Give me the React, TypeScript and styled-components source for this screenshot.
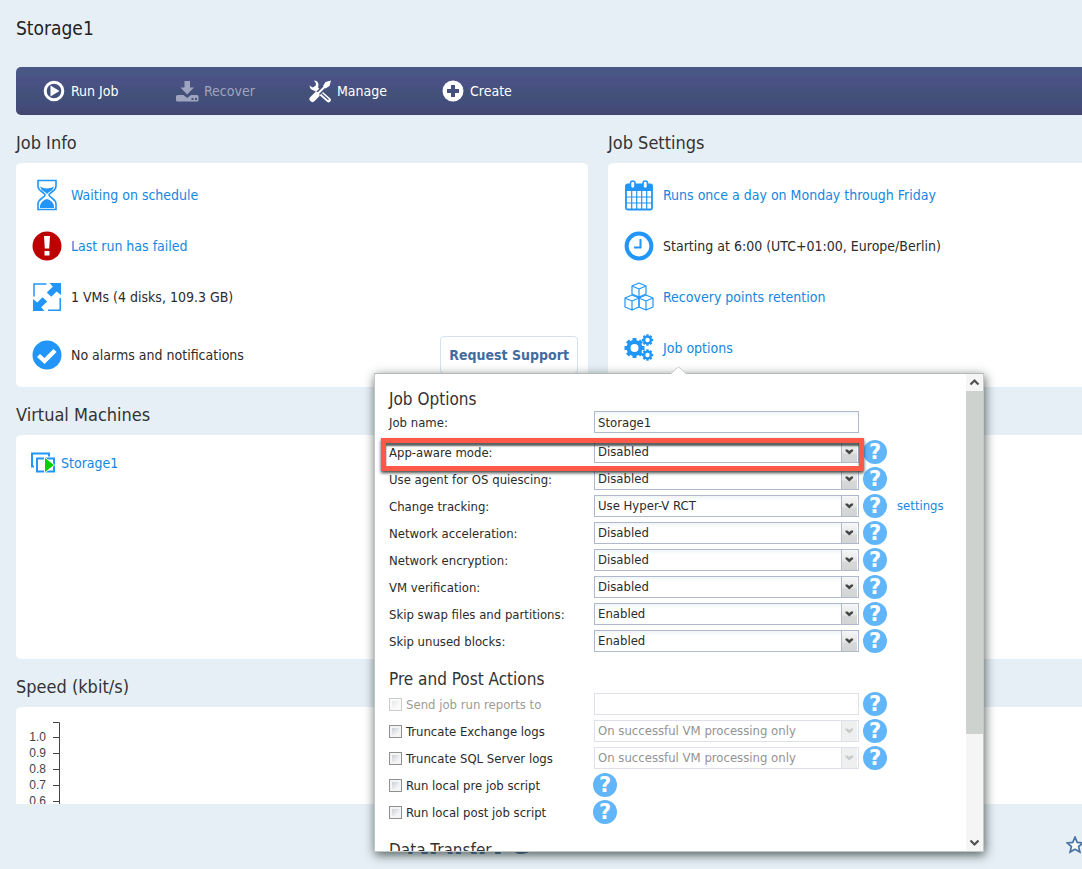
import React from 'react';
import styled, { createGlobalStyle, css } from 'styled-components';

const font = '"DejaVu Sans Condensed", "DejaVu Sans", sans-serif';
const blue = '#2196f8';

const GlobalStyle = createGlobalStyle`
  *, *::before, *::after { box-sizing: border-box; }
  body {
    margin: 0;
    background: #e7eff6;
    color: #2b2b2b;
    font-family: ${font};
    font-size: 14px;
    line-height: 20px;
  }
  button, input, select { font: inherit; color: inherit; }
`;

/* ---------- page ---------- */

const Page = styled.div`
  display: flex;
  flex-direction: column;
  min-height: 100vh;
  padding-left: 16px;
  overflow: hidden;
`;

const Title = styled.h1`
  margin: 0;
  padding: 16px 0 27px;
  font-size: 19px;
  line-height: 24px;
  font-weight: normal;
  color: #222;
`;

const Toolbar = styled.nav`
  display: flex;
  height: 48px;
  padding-left: 27px;
  border-radius: 5px 0 0 5px;
  background: linear-gradient(
    #495785 0, #495785 9px, #4b5185 11px, #4a5184 18px, #42507a 24px,
    #42507a 32px, #434d7b 36px, #444a77 42px, #41456e 48px
  );
`;

const ToolButton = styled.button`
  display: flex;
  align-items: center;
  gap: 5px;
  width: 133px;
  padding: 0;
  border: 0;
  background: none;
  color: #fff;
  text-align: left;

  svg { flex: none; }

  &:disabled { color: #a0a5bf; }
`;

const Columns = styled.div`
  display: grid;
  grid-template-columns: minmax(0, 572fr) minmax(0, 474fr);
  column-gap: 20px;
`;

const Section = styled.section`
  position: relative;
`;

const SectionTitle = styled.h2`
  margin: 0;
  padding: 16px 0 8px;
  font-size: 18px;
  line-height: 24px;
  font-weight: normal;
  color: #333;
`;

const Card = styled.div<{ $edge?: boolean; $pad?: string }>`
  min-height: 224px;
  padding: ${(p) => p.$pad ?? '6px 0 0 16px'};
  border-radius: ${(p) => (p.$edge ? '5px 0 0 5px' : '5px')};
  background: #fff;
`;

const List = styled.ul`
  margin: 0;
  padding: 0;
  list-style: none;
`;

const Item = styled.li<{ $tall?: boolean; $tight?: boolean }>`
  display: flex;
  align-items: center;
  gap: ${(p) => (p.$tight ? '5px' : '9px')};
  height: ${(p) => (p.$tall ? '65px' : '51px')};

  svg { flex: none; }
`;

const Link = styled.a`
  color: #1587e0;
  text-decoration: none;
`;

const SupportButton = styled.button`
  margin: 0 10px 0 auto;
  height: 38px;
  padding: 0 8px;
  border: 1px solid #d5e2ee;
  border-radius: 4px;
  background: #fff;
  color: #416c9f;
  font-weight: bold;
`;

const ChartCard = styled.div`
  height: 97px;
  overflow: hidden;
  border-radius: 5px 0 0 0;
  background: #fff;
`;

const Footer = styled.footer`
  display: flex;
  align-items: center;
  flex: 1;
  min-height: 65px;
  padding: 16px 0 0 390px;
`;

const Brand = styled.strong`
  padding-bottom: 4px;
  color: #4a77a5;
  font-family: "Liberation Sans", Arial, sans-serif;
  font-size: 33px;
  line-height: 36px;
`;

const StarButton = styled.button`
  margin: 0 -2px 0 auto;
  padding: 0;
  border: 0;
  background: none;
  line-height: 0;
`;

/* ---------- job options popup ---------- */

const Popup = styled.div`
  position: absolute;
  z-index: 10;
  top: calc(100% - 14px);
  left: -234px;
  display: flex;
  width: 610px;
  height: 479px;
  border: 1px solid #c3c8c5;
  border-top-color: #b4b8b6;
  background: #fff;
  box-shadow: 1px 3px 10px rgba(30, 45, 40, 0.75);
`;

const Pointer = styled.svg`
  position: absolute;
  top: -8px;
  left: 295px;
`;

const Scroller = styled.form`
  flex: 1;
  padding: 14px 0 0 14px;
  overflow: hidden;
`;

const Group = styled.fieldset`
  display: grid;
  row-gap: 3px;
  margin: 0 0 15px;
  padding: 0;
  border: 0;
  min-width: 0;
`;

const GroupTitle = styled.legend`
  padding: 0;
  margin-bottom: 2px;
  font-size: 17px;
  line-height: 22px;
  color: #333;
`;

const FieldRow = styled.div<{ $spaced?: boolean }>`
  position: relative;
  display: grid;
  grid-template-columns: 205px auto auto 1fr;
  grid-template-rows: 100%;
  align-items: center;
  height: ${(p) => (p.$spaced ? '20px' : '24px')};
  margin-bottom: ${(p) => (p.$spaced ? '5px' : '0')};
  font-size: 13px;
`;

const Label = styled.label<{ $dim?: boolean }>`
  display: flex;
  align-items: center;
  gap: 4px;
  padding-top: 2px;
  white-space: nowrap;
  color: ${(p) => (p.$dim ? '#9b9b9b' : 'inherit')};
`;

const box = css`
  width: 265px;
  height: 22px;
  border: 1px solid #b0b8cb;
  background: linear-gradient(#f0f5f7, #fff 5px);

  &:disabled {
    border-color: #dde1e7;
    background: #fff;
    color: #939393;
    opacity: 1;
  }
`;

const TextInput = styled.input`
  ${box}
  padding: 0 3px;
`;

const SelectWrap = styled.span`
  display: grid;
  grid-template-columns: 1fr 18px;
  align-items: center;

  select, svg { grid-row: 1; }
  select { grid-column: 1 / 3; }
  svg { grid-column: 2; pointer-events: none; }
`;

const Select = styled.select`
  ${box}
  appearance: none;
  padding: 0 20px 0 3px;
  line-height: 18px;
`;

const Help = styled.button`
  width: 24px;
  height: 24px;
  margin-left: 4px;
  padding: 0;
  border: 0;
  border-radius: 50%;
  background: #61b5f9;
  color: #fff;
  font-family: "DejaVu Sans", sans-serif;
  font-size: 21px;
  line-height: 24px;
  font-weight: bold;
  text-align: center;

  label + & { margin-left: -1px; }
`;

const RowLink = styled(Link)`
  margin-left: 10px;
`;

const Checkbox = styled.input`
  appearance: none;
  width: 13px;
  height: 13px;
  margin: 0 0 2px;
  border: 1px solid #8e8f8f;
  background: linear-gradient(135deg, #bcc3cc, #f7f7f7 75%);
  box-shadow: inset 0 0 0 2px #f4f4f4;

  &:disabled { opacity: 0.45; }
`;

const Highlight = styled.div`
  position: absolute;
  z-index: 1;
  top: -2px;
  left: -8px;
  width: 483px;
  height: 33px;
  border: 5px solid #fd5848;
  box-shadow: 0 2px 3px rgba(20, 30, 30, 0.8), inset 0 3px 2px rgba(20, 30, 30, 0.7);
  pointer-events: none;
`;

const ScrollTrack = styled.div`
  display: flex;
  flex-direction: column;
  width: 17px;
  background: #f5f5f5;
`;

const ScrollThumb = styled.div`
  height: 343px;
  background: #cdd2ce;
`;

const ScrollButton = styled.button`
  height: 17px;
  padding: 0;
  border: 0;
  background: none;
  line-height: 0;

  &:last-child { margin-top: auto; }
`;

/* ---------- icons ---------- */

const PlayIcon = () => (
  <svg width="23" height="23" viewBox="0 0 23 23">
    <circle cx="11" cy="11" r="8.8" fill="none" stroke="#fff" strokeWidth="3" />
    <path d="M7.5 5.5v11l9-5.500z" fill="#fff" />
  </svg>
);

const RecoverIcon = () => (
  <svg width="23" height="23" viewBox="0 0 23 23" fill="#a0a5bf">
    <path d="M8.500 1h5.500v6.500h4l-6.800 7-6.700-7h4z" />
    <path fillRule="evenodd" d="M1.500 15h6l3.700 3 3.800-3h6q1.500 0 1.500 1.500v3.500q0 1.500-1.500 1.500h-19.500q-1.500 0-1.500-1.500v-3.500q0-1.500 1.500-1.500zM15.500 18v2h2v-2zM19 18v2h2v-2z" />
  </svg>
);

const ManageIcon = () => (
  <svg width="23" height="23" viewBox="0 0 23 23">
    <path d="M6.500 8.500l13 11.500" stroke="#fff" strokeWidth="4.600" strokeLinecap="round" />
    <path d="M12.500 13.500l7 6.200" stroke="#46507e" strokeWidth="1.200" />
    <path d="M5 .5q4 0 4.500 4l-.5 4-3 2q-5 0-5.500-5l3 2 3-1 .5-3z" fill="#fff" />
    <path d="M3 19.500l14-14" stroke="#46507e" strokeWidth="5" />
    <path d="M7 15.500L17.500 5" stroke="#fff" strokeWidth="2" />
    <path d="M3.500 19l4-4" stroke="#fff" strokeWidth="6" strokeLinecap="round" />
    <path d="M22 .5l-1.500 5.500-4 2.500-2.500-2.500 2.500-4z" fill="#fff" />
  </svg>
);

const CreateIcon = () => (
  <svg width="23" height="23" viewBox="0 0 23 23">
    <circle cx="11" cy="11" r="10.500" fill="#fff" />
    <path d="M11 5v12M5 11h12" stroke="#46507e" strokeWidth="4" />
  </svg>
);

const HourglassIcon = () => (
  <svg width="30" height="32" viewBox="0 0 30 32">
    <path
      d="M6 1.500h18v5.500q0 3-3.500 5.500-3.500 2.500-3.500 3.500t3.500 3.500q3.500 2.500 3.500 5.500v5.500H6v-5.500q0-3 3.500-5.500 3.500-2.500 3.500-3.500t-3.500-3.500Q6 10 6 7z"
      fill="#fff" stroke={blue} strokeWidth="1.600"
    />
    <path d="M8 7.500q7 4 14 0-1 3.500-4 5-3 1.500-3 3 0-1.500-3-3-3-1.500-4-5z" fill={blue} />
    <path d="M8 29v-2.500q2-5.500 7-6.500 5 1 7 6.500v2.500z" fill={blue} />
  </svg>
);

const FailedIcon = () => (
  <svg width="30" height="30" viewBox="0 0 30 30">
    <circle cx="15" cy="15" r="14.500" fill="#bd0000" />
    <path d="M12 5h6l-.8 12.500h-4.400zM12.500 20h5v4.500h-5z" fill="#fff" />
  </svg>
);

const ResizeIcon = () => (
  <svg width="30" height="30" viewBox="0 0 30 30" fill={blue}>
    <path d="M14.500 2H2v12.500M28.200 16v12.200H16" fill="none" stroke={blue} strokeWidth="1.500" />
    <path d="M17.500 1H29v12l-4.300-3.600-5.500 5.400-4.400-4.400 6-5.600zM12.500 29H1V17l4.300 3.600 5.200-5.400 4.700 4.400-6 5.600z" />
  </svg>
);

const CheckIcon = () => (
  <svg width="30" height="30" viewBox="0 0 30 30">
    <circle cx="15" cy="15" r="14.500" fill={blue} />
    <path d="M6.500 15.500l6 5.500L23 10.500" fill="none" stroke="#fff" strokeWidth="4.400" />
  </svg>
);

const CalendarIcon = () => (
  <svg width="30" height="32" viewBox="0 0 30 32">
    <rect x="2" y="5.500" width="26" height="25" rx="1.500" fill="#fff" stroke={blue} strokeWidth="1.800" />
    <path d="M1.500 6h27v6h-27z" fill={blue} />
    <path d="M2 18h26M2 24h26M7.700 12v18M12.700 12v18M17.700 12v18M22.700 12v18" stroke={blue} strokeWidth="1.200" />
    <rect x="6.500" y="2" width="4.500" height="7.500" rx="2.200" fill="#fff" stroke={blue} strokeWidth="1.600" />
    <rect x="19" y="2" width="4.500" height="7.500" rx="2.200" fill="#fff" stroke={blue} strokeWidth="1.600" />
  </svg>
);

const ClockIcon = () => (
  <svg width="30" height="30" viewBox="0 0 30 30" fill="none" stroke={blue}>
    <circle cx="15" cy="15" r="12.400" strokeWidth="4" />
    <path d="M16.500 8v8.500H10" strokeWidth="2" />
  </svg>
);

const CubesIcon = () => (
  <svg width="30" height="30" viewBox="0 0 30 30" fill="none" stroke={blue} strokeWidth="1.200" strokeLinejoin="round">
    <path d="M15 1l7 3v8l-7 3-7-3V4zM8 4l7 3 7-3M15 7v8" />
    <path d="M8 13l7 3v9l-7 3-7-3v-9zM1 16l7 3 7-3M8 19v9" />
    <path d="M22 13l7 3v9l-7 3-7-3v-9zM15 16l7 3 7-3M22 19v9" />
  </svg>
);

const Gear = ({ x, y, r, hole, tooth }: { x: number; y: number; r: number; hole: number; tooth: number }) => (
  <g transform={`translate(${x} ${y})`}>
    <circle r={(r + hole) / 2} fill="none" stroke={blue} strokeWidth={r - hole} />
    {[0, 45, 90, 135, 180, 225, 270, 315].map((a) => (
      <rect key={a} x={-tooth / 2} y={-r - tooth / 2} width={tooth} height={tooth} fill={blue} transform={`rotate(${a})`} />
    ))}
  </g>
);

const GearsIcon = () => (
  <svg width="30" height="30" viewBox="0 0 30 30">
    <Gear x={10.500} y={15} r={8} hole={4} tooth={4} />
    <Gear x={23.500} y={7} r={4.500} hole={2.200} tooth={2.400} />
    <Gear x={23.500} y={22} r={4.500} hole={2.200} tooth={2.400} />
  </svg>
);

const VmIcon = () => (
  <svg width="26" height="22" viewBox="0 0 26 22">
    <path d="M4 14.500H2v-13h17v3" fill="none" stroke={blue} strokeWidth="2" />
    <path d="M7 6.500h17v13H7z" fill="#fff" stroke={blue} strokeWidth="2" />
    <path d="M14.500 5v16l10-8z" fill="#00cf00" stroke="#fff" strokeWidth="1" />
  </svg>
);

const StarIcon = () => (
  <svg width="18" height="18" viewBox="0 0 18 18">
    <path d="M9 1.200l2.200 5.200 5.600.5-4.200 3.700 1.300 5.500L9 13.200l-4.900 2.900 1.300-5.500L1.200 6.900l5.600-.5z" fill="#fff" stroke="#4574a8" strokeWidth="1.700" />
  </svg>
);

const DropArrow = ({ dim }: { dim?: boolean }) => (
  <svg width="17" height="20" viewBox="0 0 17 20">
    <defs>
      <linearGradient id="dropFace" x1="0" y1="0" x2="0" y2="1">
        <stop offset="0" stopColor="#f6f7f6" />
        <stop offset="0.55" stopColor="#e4e6e5" />
        <stop offset="0.6" stopColor="#d6d9d8" />
        <stop offset="1" stopColor="#d2d5d3" />
      </linearGradient>
    </defs>
    <rect width="16" height="20" fill={dim ? '#edf0ee' : 'url(#dropFace)'} />
    <path d="M.5 0v20" stroke={dim ? '#dde1e7' : '#b0b8cb'} />
    <path d="M4.500 7.500h2l1.800 1.600 1.800-1.600h2v1.500l-3.800 3.500-3.800-3.500z" fill={dim ? '#c6cbc8' : '#444'} />
  </svg>
);

const Chevron = ({ down }: { down?: boolean }) => (
  <svg width="17" height="17" viewBox="0 0 17 17">
    <path d={down ? 'M4.500 6.500l4 4 4-4' : 'M4.500 10.500l4-4 4 4'} fill="none" stroke="#505050" strokeWidth="2.200" />
  </svg>
);

const ticks = ['1.0', '0.9', '0.8', '0.7', '0.6'];

const SpeedAxis = () => (
  <svg width="60" height="97" viewBox="0 0 60 97" fontFamily="Liberation Sans, Arial, sans-serif" fontSize="12" fill="#444">
    <path d="M37 15.500h6.500V97" fill="none" stroke="#444" />
    {ticks.map((t, i) => (
      <g key={t}>
        <path d={`M37 ${30.5 + i * 16}h6`} stroke="#444" />
        <text x="30" y={34 + i * 16} textAnchor="end">{t}</text>
      </g>
    ))}
  </svg>
);

/* ---------- form parts ---------- */

const HelpButton = ({ topic }: { topic: string }) => (
  <Help type="button" aria-label={`Help: ${topic}`}>?</Help>
);

const SelectBox = ({ id, value, disabled, label }: { id: string; value: string; disabled?: boolean; label?: string }) => (
  <SelectWrap>
    <Select id={id} disabled={disabled} aria-label={label}>
      <option>{value}</option>
    </Select>
    <DropArrow dim={disabled} />
  </SelectWrap>
);

type Option = { id: string; label: string; value: string; marked?: boolean; link?: string };

const options: Option[] = [
  { id: 'app-aware', label: 'App-aware mode:', value: 'Disabled', marked: true },
  { id: 'quiescing', label: 'Use agent for OS quiescing:', value: 'Disabled' },
  { id: 'tracking', label: 'Change tracking:', value: 'Use Hyper-V RCT', link: 'settings' },
  { id: 'acceleration', label: 'Network acceleration:', value: 'Disabled' },
  { id: 'encryption', label: 'Network encryption:', value: 'Disabled' },
  { id: 'verification', label: 'VM verification:', value: 'Disabled' },
  { id: 'swap', label: 'Skip swap files and partitions:', value: 'Enabled' },
  { id: 'unused', label: 'Skip unused blocks:', value: 'Enabled' },
];

type Action = { id: string; label: string; control?: 'text' | 'select'; disabled?: boolean };

const actions: Action[] = [
  { id: 'reports', label: 'Send job run reports to', control: 'text', disabled: true },
  { id: 'exchange', label: 'Truncate Exchange logs', control: 'select' },
  { id: 'sql', label: 'Truncate SQL Server logs', control: 'select' },
  { id: 'pre', label: 'Run local pre job script' },
  { id: 'post', label: 'Run local post job script' },
];

const JobOptionsPopup = () => (
  <Popup role="dialog" aria-label="Job Options">
    <Pointer width="17" height="9" viewBox="0 0 17 9">
      <path d="M0 8.500L8.500.5l8.500 8z" fill="#fff" />
      <path d="M.5 8L8.500.7l8 7.300" fill="none" stroke="#c9cccb" />
    </Pointer>
    <Scroller>
      <Group>
        <GroupTitle>Job Options</GroupTitle>
        <FieldRow $spaced>
          <Label htmlFor="job-name">Job name:</Label>
          <TextInput id="job-name" defaultValue="Storage1" />
        </FieldRow>
        {options.map((o) => (
          <FieldRow key={o.id}>
            <Label htmlFor={o.id}>{o.label}</Label>
            <SelectBox id={o.id} value={o.value} />
            <HelpButton topic={o.label} />
            {o.link && <RowLink href="#settings">{o.link}</RowLink>}
            {o.marked && <Highlight />}
          </FieldRow>
        ))}
      </Group>
      <Group>
        <GroupTitle>Pre and Post Actions</GroupTitle>
        {actions.map((a) => (
          <FieldRow key={a.id}>
            <Label $dim={a.disabled}>
              <Checkbox type="checkbox" disabled={a.disabled} />
              {a.label}
            </Label>
            {a.control === 'text' && <TextInput disabled aria-label={a.label} />}
            {a.control === 'select' && (
              <SelectBox id={`${a.id}-when`} value="On successful VM processing only" label={a.label} disabled />
            )}
            <HelpButton topic={a.label} />
          </FieldRow>
        ))}
      </Group>
      <Group>
        <GroupTitle>Data Transfer</GroupTitle>
      </Group>
    </Scroller>
    <ScrollTrack>
      <ScrollButton type="button" aria-label="Scroll up"><Chevron /></ScrollButton>
      <ScrollThumb />
      <ScrollButton type="button" aria-label="Scroll down"><Chevron down /></ScrollButton>
    </ScrollTrack>
  </Popup>
);

export default function App() {
  return (
    <Page>
      <GlobalStyle />
      <Title>Storage1</Title>
      <Toolbar>
        <ToolButton><PlayIcon />Run Job</ToolButton>
        <ToolButton disabled><RecoverIcon />Recover</ToolButton>
        <ToolButton><ManageIcon />Manage</ToolButton>
        <ToolButton><CreateIcon />Create</ToolButton>
      </Toolbar>

      <Columns>
        <Section>
          <SectionTitle>Job Info</SectionTitle>
          <Card>
            <List>
              <Item><HourglassIcon /><Link href="#schedule">Waiting on schedule</Link></Item>
              <Item><FailedIcon /><Link href="#last-run">Last run has failed</Link></Item>
              <Item><ResizeIcon />1 VMs (4 disks, 109.3 GB)</Item>
              <Item $tall>
                <CheckIcon />No alarms and notifications
                <SupportButton>Request Support</SupportButton>
              </Item>
            </List>
          </Card>
        </Section>
        <Section>
          <SectionTitle>Job Settings</SectionTitle>
          <Card $edge>
            <List>
              <Item><CalendarIcon /><Link href="#days">Runs once a day on Monday through Friday</Link></Item>
              <Item><ClockIcon />Starting at 6:00 (UTC+01:00, Europe/Berlin)</Item>
              <Item><CubesIcon /><Link href="#retention">Recovery points retention</Link></Item>
              <Item><GearsIcon /><Link href="#options">Job options</Link></Item>
            </List>
          </Card>
          <JobOptionsPopup />
        </Section>
      </Columns>

      <Section>
        <SectionTitle>Virtual Machines</SectionTitle>
        <Card $edge $pad="2px 0 0 14px">
          <List>
            <Item $tight><VmIcon /><Link href="#storage1">Storage1</Link></Item>
          </List>
        </Card>
      </Section>

      <Section>
        <SectionTitle>Speed (kbit/s)</SectionTitle>
        <ChartCard><SpeedAxis /></ChartCard>
      </Section>

      <Footer>
        <Brand>NAKIVO</Brand>
        <StarButton aria-label="Add to favorites"><StarIcon /></StarButton>
      </Footer>
    </Page>
  );
}
